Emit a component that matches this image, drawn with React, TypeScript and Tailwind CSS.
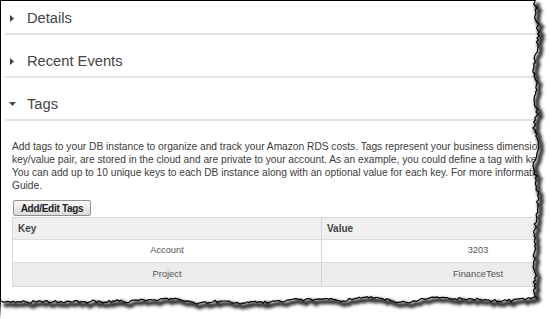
import React from "react";

function rng(seed: number) {
  let s = seed;
  return () => {
    s = (s * 16807) % 2147483647;
    return (s - 1) / 2147483646;
  };
}

function TornEdge() {
  const r = rng(12345);
  const pts: [number, number][] = [];
  let d = 0;
  for (let y = 0; y <= 296; y += 2) {
    d = Math.max(-3, Math.min(3, (d + (r() - 0.5) * 2.8) * 0.88));
    pts.push([535.5 + d + (r() - 0.5) * 2, y]);
  }
  d = 0;
  for (let x = 537; x >= 0; x -= 2) {
    d = Math.max(-2.5, Math.min(2.5, (d + (r() - 0.5) * 2.6) * 0.88));
    pts.push([x, 302 - (x / 537) * 3 + d + (r() - 0.5) * 1.8]);
  }
  const line = pts
    .map((p, i) => `${i ? "L" : "M"}${p[0].toFixed(1)} ${p[1].toFixed(1)}`)
    .join(" ");
  const fill = line + " L0 319 L550 319 L550 0 Z";
  return (
    <svg className="absolute left-0 top-0" width={550} height={319}>
      <defs>
        <filter id="tornblur" x="-5%" y="-5%" width="110%" height="110%">
          <feGaussianBlur stdDeviation="1.6" />
        </filter>
      </defs>
      <path d={fill} fill="#ffffff" />
      <path
        d={line}
        transform="translate(3,3)"
        stroke="#333"
        strokeWidth={4.5}
        fill="none"
        filter="url(#tornblur)"
      />
      <path d={line} stroke="#000" strokeWidth={1.2} fill="none" />
    </svg>
  );
}

function Arrow({ open }: { open: boolean }) {
  return open ? (
    <svg width="7" height="5" viewBox="0 0 7 5" className="shrink-0">
      <path d="M0 0 L7 0 L3.5 4 Z" fill="#444" />
    </svg>
  ) : (
    <svg width="5" height="7" viewBox="0 0 5 7" className="shrink-0">
      <path d="M0 0 L4 3.5 L0 7 Z" fill="#444" />
    </svg>
  );
}

function Section({ title, open, first }: { title: string; open: boolean; first?: boolean }) {
  return (
    <div
      className={
        "ml-[4px] border-b-2 border-[#e4e4e4] pb-[6px] " + (first ? "pt-[8px]" : "pt-[17px]")
      }
    >
      <div className="flex h-[18px] items-center">
        <div className={"flex w-[22px] items-center " + (open ? "pl-[4px]" : "pl-[5px]")}>
          <Arrow open={open} />
        </div>
        <span className="text-[14.7px] leading-[18px] text-[#444]">{title}</span>
      </div>
    </div>
  );
}

export default function App() {
  return (
    <div
      className="relative h-[319px] w-[550px] overflow-hidden bg-white"
      style={{ fontFamily: '"Liberation Sans", Arial, sans-serif' }}
    >
      <div className="h-[319px] w-[700px] border-l border-t border-black">
        <Section title="Details" open={false} first />
        <Section title="Recent Events" open={false} />
        <Section title="Tags" open={true} />
        <div className="mt-[19px] pl-[11px] text-[10.2px] leading-[13px] text-[#3c3c3c]">
          <div className="whitespace-nowrap">
            Add tags to your DB instance to organize and track your Amazon RDS costs. Tags represent your business dimensions, such as
          </div>
          <div className="whitespace-nowrap">
            key/value pair, are stored in the cloud and are private to your account. As an example, you could define a tag with key = Project
          </div>
          <div className="whitespace-nowrap">
            You can add up to 10 unique keys to each DB instance along with an optional value for each key. For more information, see the
          </div>
          <div className="whitespace-nowrap">Guide.</div>
        </div>
        <div className="ml-[12px] mt-[8px]">
          <button className="flex h-[16px] w-[78px] items-center justify-center rounded-[2px] border border-[#8f8f8f] bg-gradient-to-b from-[#fafafa] to-[#dcdcdc] text-[10px] font-bold tracking-[-0.3px] text-[#222]">
            Add/Edit Tags
          </button>
        </div>
        <div className="ml-[11px] mt-[1px] w-[623px] border border-[#dadada] text-[9.3px] text-[#555]">
          <div className="grid h-[22px] grid-cols-[309px_1fr] border-b border-[#dcdcdc] bg-[#efefef] text-[10px] font-bold text-[#444]">
            <div className="flex items-center border-r border-[#d4d4d4] pl-[5px]">Key</div>
            <div className="flex items-center pl-[5px]">Value</div>
          </div>
          <div className="grid h-[23px] grid-cols-[309px_1fr] border-b border-[#dcdcdc] bg-white">
            <div className="flex items-center justify-center border-r border-[#d4d4d4]">Account</div>
            <div className="flex items-center justify-center">3203</div>
          </div>
          <div className="grid h-[23px] grid-cols-[309px_1fr] bg-[#ececec]">
            <div className="flex items-center justify-center border-r border-[#d4d4d4]">Project</div>
            <div className="flex items-center justify-center">FinanceTest</div>
          </div>
        </div>
      </div>
      <TornEdge />
    </div>
  );
}
